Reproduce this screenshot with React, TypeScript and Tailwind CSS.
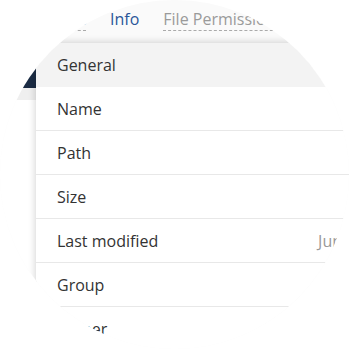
export default function App() {
  const rows: [string, string][] = [
    ["Name", "report.pdf"],
    ["Path", "/Documents"],
    ["Size", "2.4 MB"],
    ["Last modified", "Jun 14, 2023 10:32 AM"],
    ["Group", "staff"],
    ["Owner", "admin"],
  ];
  return (
    <div className="w-[349px] h-[349px] bg-white font-['Open_Sans',sans-serif] text-[16px]">
      <div className="w-[349px] h-[349px] rounded-full overflow-hidden flex bg-[#fafafa]">
        <div className="w-[36px] shrink-0 flex flex-col">
          <div className="h-[88px] bg-[#1b2c44]" />
          <div className="h-[12px] bg-[#efefef]" />
          <div className="flex-1 bg-white" />
        </div>
        <div className="w-[462px] shrink-0 flex flex-col">
          <div className="h-[43px] shrink-0 flex items-start gap-6 pt-[8px] leading-[22px]">
            <span className="w-[50px] whitespace-nowrap text-[#9a9a9a] border-b border-dashed border-[#aaaaaa]">Details</span>
            <span className="whitespace-nowrap text-[#2a5699] border-b border-transparent">Info</span>
            <span className="whitespace-nowrap text-[#9a9a9a] border-b border-dashed border-[#aaaaaa]">File Permissions</span>
          </div>
          <div className="flex-1 bg-white shadow-[0_0_8px_rgba(0,0,0,0.2)] flex flex-col">
            <div className="h-[44px] shrink-0 bg-[#f3f3f3] flex items-center pl-[21px] text-[#333333]">General</div>
            {rows.map(([label, value]) => (
              <div key={label} className="h-[44px] shrink-0 border-b border-[#e8e8e8] flex items-center justify-between pl-[21px] pr-[15px]">
                <span className="text-[#333333] whitespace-nowrap">{label}</span>
                <span className="text-[#999999] whitespace-nowrap">{value}</span>
              </div>
            ))}
          </div>
        </div>
      </div>
    </div>
  );
}
